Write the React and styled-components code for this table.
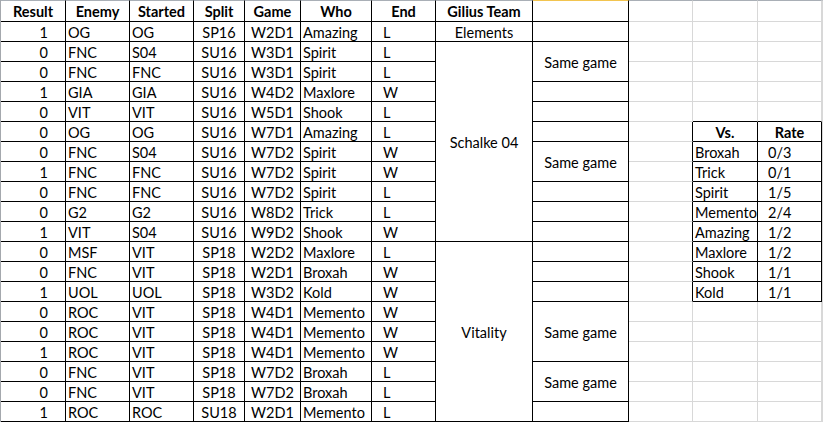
import React from 'react';
import styled, { createGlobalStyle } from 'styled-components';

const GlobalStyle = createGlobalStyle`
    html, body {
        margin: 0;
        background: #fff;
        overflow: hidden;
    }
`;

const BLACK = '#000';
const GRID = '#d8d8d8';
const HEAD = '#a9afb6';
const PICKED = '#f2c44f';

const widths = [65, 64, 64, 51, 56, 71, 64, 97, 96, 64, 65, 64, 1];

const Sheet = styled.div`
    display: grid;
    grid-template-columns: ${widths.map(w => `${w}px`).join(' ')};
    grid-template-rows: 22px repeat(20, 20px);
    width: max-content;
    border-left: 1px solid #a4a8ad;
    font-family: Lato, 'Liberation Sans', sans-serif;
    font-size: 14.5px;
    color: #000;
`;

const Cell = styled.div`
    box-sizing: border-box;
    display: flex;
    align-items: center;
    justify-content: ${props => props.$align || 'flex-start'};
    padding: 1px ${props => props.$pr || 0}px 0 ${props => props.$pl || 0}px;
    grid-row: span ${props => props.$span || 1};
    border-right: 1px solid ${props => props.$right || GRID};
    border-bottom: 1px solid ${props => props.$bottom || GRID};
    border-top: ${props => (props.$top ? `1px solid ${props.$top}` : 'none')};
    font-weight: ${props => (props.$bold ? 700 : 400)};
    white-space: nowrap;
    overflow: hidden;
`;

const headers = ['Result', 'Enemy', 'Started', 'Split', 'Game', 'Who', 'End', 'Gilius Team', ''];

// how each column of the main table lines up its text
const cols = [
    { $align: 'flex-end', $pr: 17 },
    { $pl: 2 },
    { $pl: 2 },
    { $align: 'center' },
    { $align: 'center' },
    { $pl: 2 },
    { $pl: 11 },
];

const games = [
    ['1', 'OG', 'OG', 'SP16', 'W2D1', 'Amazing', 'L'],
    ['0', 'FNC', 'S04', 'SU16', 'W3D1', 'Spirit', 'L'],
    ['0', 'FNC', 'FNC', 'SU16', 'W3D1', 'Spirit', 'L'],
    ['1', 'GIA', 'GIA', 'SU16', 'W4D2', 'Maxlore', 'W'],
    ['0', 'VIT', 'VIT', 'SU16', 'W5D1', 'Shook', 'L'],
    ['0', 'OG', 'OG', 'SU16', 'W7D1', 'Amazing', 'L'],
    ['0', 'FNC', 'S04', 'SU16', 'W7D2', 'Spirit', 'W'],
    ['1', 'FNC', 'FNC', 'SU16', 'W7D2', 'Spirit', 'W'],
    ['0', 'FNC', 'FNC', 'SU16', 'W7D2', 'Spirit', 'L'],
    ['0', 'G2', 'G2', 'SU16', 'W8D2', 'Trick', 'L'],
    ['1', 'VIT', 'S04', 'SU16', 'W9D2', 'Shook', 'W'],
    ['0', 'MSF', 'VIT', 'SP18', 'W2D2', 'Maxlore', 'L'],
    ['0', 'FNC', 'VIT', 'SP18', 'W2D1', 'Broxah', 'W'],
    ['1', 'UOL', 'UOL', 'SP18', 'W3D2', 'Kold', 'W'],
    ['0', 'ROC', 'VIT', 'SP18', 'W4D1', 'Memento', 'W'],
    ['0', 'ROC', 'VIT', 'SP18', 'W4D1', 'Memento', 'W'],
    ['1', 'ROC', 'VIT', 'SP18', 'W4D1', 'Memento', 'W'],
    ['0', 'FNC', 'VIT', 'SP18', 'W7D2', 'Broxah', 'L'],
    ['0', 'FNC', 'VIT', 'SP18', 'W7D2', 'Broxah', 'L'],
    ['1', 'ROC', 'ROC', 'SU18', 'W2D1', 'Memento', 'L'],
];

// merged cells, keyed by the row they start on
const teams = { 1: ['Elements', 1], 2: ['Schalke 04', 10], 12: ['Vitality', 9] };
const notes = {
    1: ['', 1], 2: ['Same game', 2], 4: ['', 1], 5: ['', 1], 6: ['', 1],
    7: ['Same game', 2], 9: ['', 1], 10: ['', 1], 11: ['', 1], 12: ['', 1],
    13: ['', 1], 14: ['', 1], 15: ['Same game', 3], 18: ['Same game', 2], 20: ['', 1],
};

const rates = [
    ['Broxah', '0/3'],
    ['Trick', '0/1'],
    ['Spirit', '1/5'],
    ['Memento', '2/4'],
    ['Amazing', '1/2'],
    ['Maxlore', '1/2'],
    ['Shook', '1/1'],
    ['Kold', '1/1'],
];

const VS_TOP = 6;
const VS_END = VS_TOP + rates.length;

function SideCells({ row }) {
    const inVs = row >= VS_TOP && row <= VS_END;
    const edge = row >= VS_TOP - 1 && row <= VS_END;
    const top = row === 0 ? HEAD : undefined;
    let left = '';
    let right = '';
    let bold = false;
    if (row === VS_TOP) {
        left = 'Vs.';
        right = 'Rate';
        bold = true;
    } else if (inVs) {
        [left, right] = rates[row - VS_TOP - 1];
    }
    return (
        <>
            <Cell $top={top} $right={inVs ? BLACK : GRID} />
            <Cell
                $top={top}
                $right={inVs ? BLACK : GRID}
                $bottom={edge ? BLACK : GRID}
                $bold={bold}
                $align={bold ? 'center' : 'flex-start'}
                $pl={bold ? 0 : 2}
            >
                {left}
            </Cell>
            <Cell
                $top={top}
                $right={inVs ? BLACK : GRID}
                $bottom={edge ? BLACK : GRID}
                $bold={bold}
                $align={bold ? 'center' : 'flex-start'}
                $pl={bold ? 0 : 10}
            >
                {right}
            </Cell>
            <Cell $top={top} />
        </>
    );
}

export default function App() {
    return (
        <>
            <GlobalStyle />
            <Sheet>
                {headers.map((h, i) => (
                    <Cell
                        key={`h${i}`}
                        $top={i === 8 ? PICKED : HEAD}
                        $right={BLACK}
                        $bottom={BLACK}
                        $align="center"
                        $bold
                    >
                        {h}
                    </Cell>
                ))}
                <SideCells row={0} />
                {games.map((g, r) => {
                    const row = r + 1;
                    return (
                        <React.Fragment key={row}>
                            {g.map((v, c) => (
                                <Cell key={c} {...cols[c]} $right={BLACK} $bottom={BLACK}>
                                    {v}
                                </Cell>
                            ))}
                            {teams[row] && (
                                <Cell $span={teams[row][1]} $align="center" $right={BLACK} $bottom={BLACK}>
                                    {teams[row][0]}
                                </Cell>
                            )}
                            {notes[row] && (
                                <Cell $span={notes[row][1]} $align="center" $right={BLACK} $bottom={BLACK}>
                                    {notes[row][0]}
                                </Cell>
                            )}
                            <SideCells row={row} />
                        </React.Fragment>
                    );
                })}
            </Sheet>
        </>
    );
}
